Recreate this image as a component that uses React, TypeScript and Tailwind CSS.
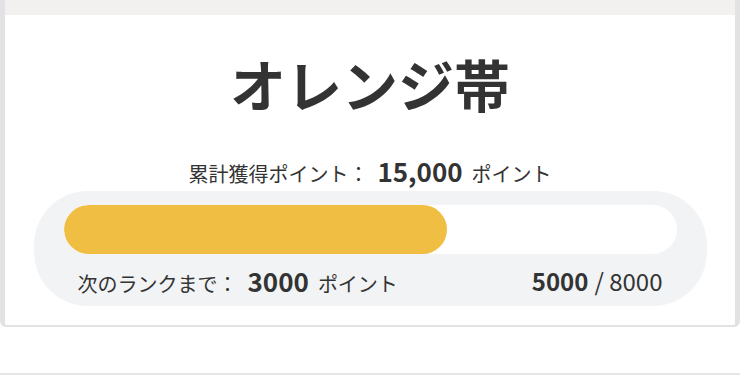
import React from "react";

export default function App() {
  const current = 5000;
  const max = 8000;
  const pct = (current / max) * 100;
  return (
    <div
      className="relative w-[740px] h-[375px] bg-white overflow-hidden text-[#333333]"
      style={{ fontFamily: '"Noto Sans CJK JP", "Noto Sans", sans-serif' }}
    >
      <div className="h-[327px] border-x-[5px] border-b-2 border-[#e2e2e4] rounded-b-[6px] flex flex-col overflow-hidden">
        <div className="h-[15px] bg-[#f2f1ef] shrink-0" />
        <div className="flex flex-col items-center pt-[40px]">
          <h1 className="text-[56px] leading-[56px] font-bold tracking-normal">オレンジ帯</h1>
          <div className="mt-[40px] h-[30px] flex items-baseline text-[20px]">
            <span>累計獲得ポイント：</span>
            <span className="ml-[9px] text-[26px] font-bold">15,000</span>
            <span className="ml-[9px]">ポイント</span>
          </div>
          <div className="mt-[10px] w-[673px] rounded-[54px] bg-[#f2f3f5] pt-[14px] px-[30px]">
            <div className="h-[49px] rounded-full bg-white overflow-hidden">
              <div className="h-full rounded-full bg-[#f0be42]" style={{ width: `${pct}%` }} />
            </div>
            <div className="h-[52px] pt-[1px] px-[14px] flex items-center justify-between">
              <div className="flex items-baseline text-[20px]">
                <span>次のランクまで：</span>
                <span className="ml-[10px] text-[26px] font-bold">3000</span>
                <span className="ml-[9px]">ポイント</span>
              </div>
              <div className="flex items-baseline text-[24px]">
                <span className="font-bold">5000</span>
                <span className="ml-[6px]">/ 8000</span>
              </div>
            </div>
          </div>
        </div>
      </div>
      <div className="mt-[46px] border-t-2 border-[#e5e5e5]" />
    </div>
  );
}
